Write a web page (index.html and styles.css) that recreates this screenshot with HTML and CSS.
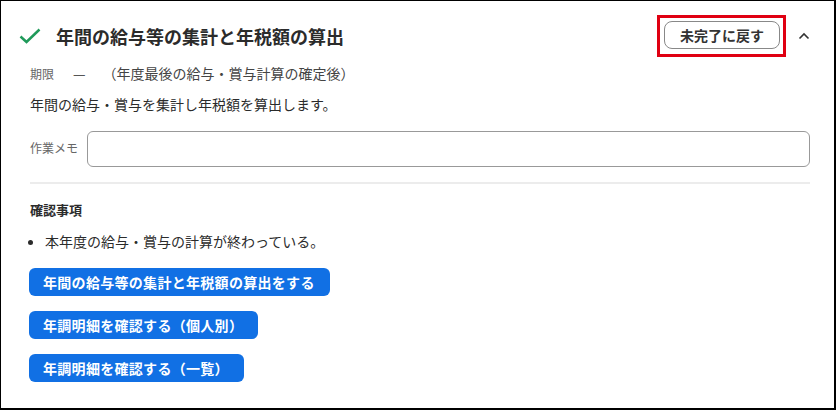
FILE: index.html
```html
<!DOCTYPE html>
<html lang="ja">
<head>
<meta charset="utf-8">
<link rel="stylesheet" href="styles.css">
</head>
<body>
<div class="card">
  <div class="header">
    <svg class="check" width="22" height="16" viewBox="0 0 22 16"><path d="M1.5 8.5 L7.5 14 L20.5 1.5" fill="none" stroke="#1f9a5a" stroke-width="2.5"/></svg>
    <h1 class="title">年間の給与等の集計と年税額の算出</h1>
    <div class="highlight">
      <button class="revert">未完了に戻す</button>
    </div>
    <svg class="chevron" width="12" height="8" viewBox="0 0 12 8"><path d="M1.5 6.5 L6 2 L10.5 6.5" fill="none" stroke="#333" stroke-width="1.6"/></svg>
  </div>
  <div class="body">
    <div class="deadline"><span class="label">期限</span><span class="dash">—</span><span class="value">（年度最後の給与・賞与計算の確定後）</span></div>
    <p class="desc">年間の給与・賞与を集計し年税額を算出します。</p>
    <div class="memo"><span class="memo-label">作業メモ</span><div class="memo-input"></div></div>
    <hr class="divider">
    <h2 class="sub">確認事項</h2>
    <ul class="checks"><li>本年度の給与・賞与の計算が終わっている。</li></ul>
    <div class="actions">
      <button class="primary">年間の給与等の集計と年税額の算出をする</button>
      <button class="primary">年調明細を確認する（個人別）</button>
      <button class="primary">年調明細を確認する（一覧）</button>
    </div>
  </div>
</div>
</body>
</html>
```

FILE: styles.css
```css
* { box-sizing: border-box; }
html, body { margin: 0; padding: 0; background: #fff; }
body { font-family: "Noto Sans CJK JP", "Noto Sans", sans-serif; color: #333; }
.card {
  width: 836px; height: 410px;
  border-style: solid; border-color: #000;
  border-width: 1px 2px 2px 1px;
  background: #fff;
}
.header {
  display: flex; align-items: center;
  height: 44px; margin-top: 13px;
  padding: 0 24px 0 18px;
}
.check { flex: none; margin-right: 15px; }
.title { margin: 0; font-size: 18px; font-weight: 700; color: #2b2b2b; flex: 1; line-height: 24px; }
.highlight {
  border: 3px solid #e00012;
  padding: 3px 3px 3px 4px;
  height: 42px;
  display: flex;
}
.revert {
  font-family: inherit; font-size: 14px; font-weight: 700; color: #333;
  background: #fff; border: 1px solid #888; border-radius: 8px;
  height: 28px; padding: 0 15px; line-height: 26px;
}
.chevron { margin-left: 12px; flex: none; }
.body { padding: 0 24px 0 29px; }
.deadline { display: flex; align-items: center; height: 20px; margin-top: 5px; font-size: 14px; color: #444; }
.label { font-size: 12px; color: #666; width: 43px; }
.dash { margin-right: 17px; color: #555; }
.value { color: #444; }
.desc { margin: 11px 0 0; font-size: 14px; line-height: 20px; color: #2b2b2b; }
.memo { display: flex; align-items: flex-start; margin-top: 17px; }
.memo-label { font-size: 12px; color: #666; width: 57px; line-height: 20px; margin-top: 7px; }
.memo-input { flex: 1; height: 36px; border: 1px solid #999; border-radius: 6px; }
.divider { border: 0; border-top: 2px solid #ececec; margin: 15px 0 0; }
.sub { margin: 16px 0 0; font-size: 13px; font-weight: 700; line-height: 20px; color: #2b2b2b; }
.checks { margin: 11px 0 0; padding-left: 15px; font-size: 14px; line-height: 20px; color: #2b2b2b; }
.actions { display: flex; flex-direction: column; align-items: flex-start; gap: 15px; margin-top: 17px; }
.primary {
  font-family: inherit; font-size: 14px; font-weight: 700; color: #fff;
  background: #1170e4; border: 0; border-radius: 6px;
  height: 28px; padding: 0 15px 0 14px; letter-spacing: 0.3px; line-height: 28px;
  margin-left: -1px;
}
```
